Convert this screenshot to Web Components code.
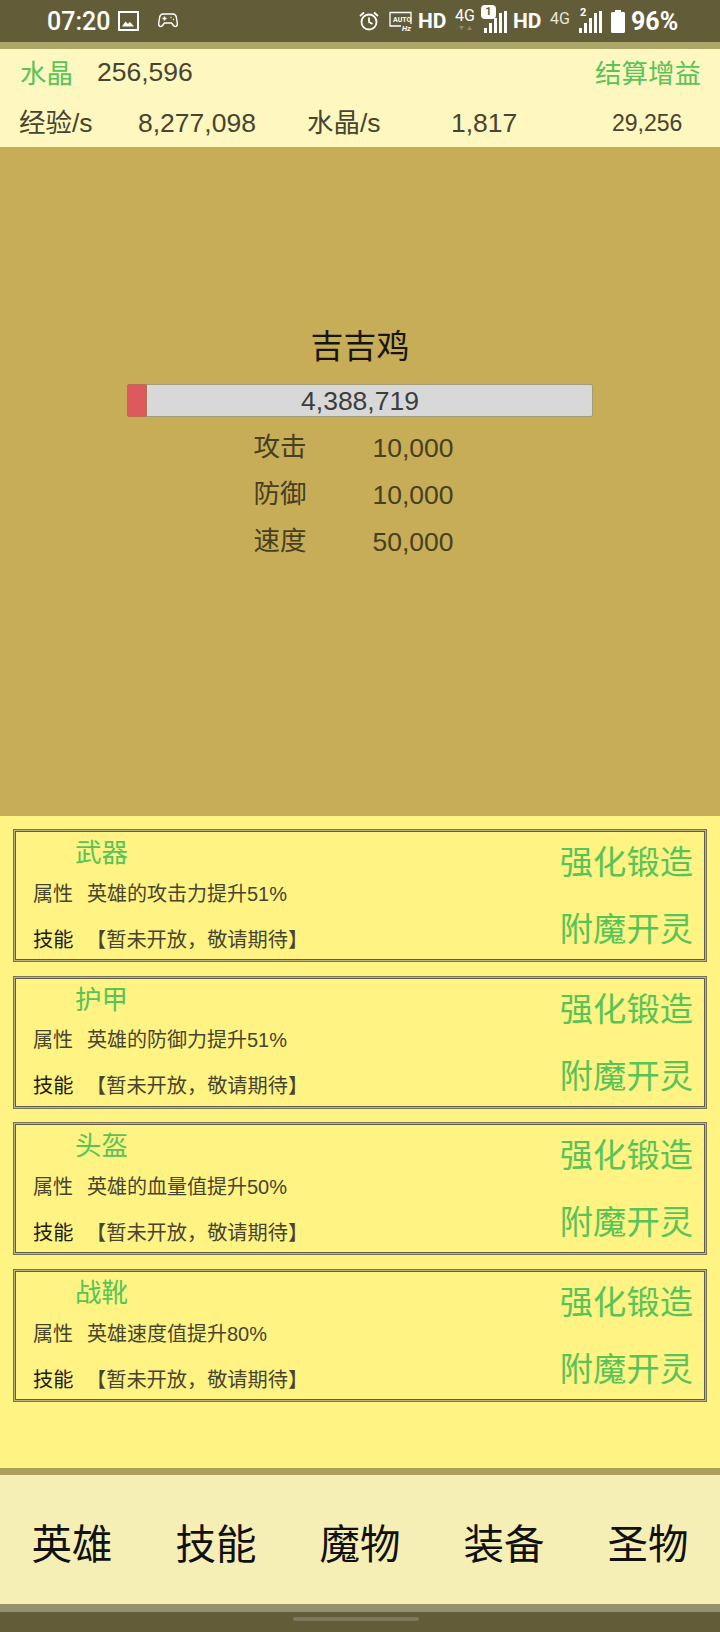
<!DOCTYPE html>
<html lang="zh">
<head>
<meta charset="utf-8">
<title>Game</title>
<style>
  html, body { margin: 0; padding: 0; }
  body {
    width: 720px;
    height: 1632px;
    overflow: hidden;
    display: flex;
    flex-direction: column;
    font-family: "Liberation Sans", "Noto Sans CJK SC", sans-serif;
    background: #625c38;
  }
</style>
</head>
<body>
<status-bar></status-bar>
<res-panel></res-panel>
<boss-panel name="吉吉鸡" hp="4,388,719"></boss-panel>
<gear-list>
  <gear-card name="武器" desc="英雄的攻击力提升51%"></gear-card>
  <gear-card name="护甲" desc="英雄的防御力提升51%"></gear-card>
  <gear-card name="头盔" desc="英雄的血量值提升50%"></gear-card>
  <gear-card name="战靴" desc="英雄速度值提升80%"></gear-card>
</gear-list>
<tab-bar></tab-bar>
<home-bar></home-bar>

<script>
class StatusBar extends HTMLElement {
  constructor() {
    super();
    this.attachShadow({ mode: 'open' });
    const bars = `<path d="M1 18h3v5H1zM6 13h3v10H6zM11 8h3v15h-3zM16 3h3v20h-3zM21 1h3v22h-3z"/>`;
    this.shadowRoot.innerHTML = `
      <style>
        :host {
          display: flex;
          align-items: center;
          flex: none;
          height: 42px;
          background: #625c38;
          color: #fff;
          padding-left: 47px;
          box-sizing: border-box;
          font-family: Roboto, sans-serif;
          white-space: nowrap;
        }
        svg { display: block; flex: none; }
        .time { font-size: 25px; font-weight: 500; width: 71px; }
        .hd { font-size: 21px; font-weight: 700; width: 28px; }
        .g { font-size: 16px; font-weight: 400; line-height: 15px; width: 19px; }
        .dim { color: #e8e6d8; }
        .pct { font-size: 25px; font-weight: 700; width: 45px; }
        .right { display: flex; align-items: center; margin-left: auto; padding-right: 44px; }
        .sim { position: relative; display: block; }
        .badge {
          position: absolute; left: -2px; top: -5px; width: 15px; height: 14px;
          border-radius: 4px; background: #fff; color: #625c38;
          font-size: 11px; font-weight: 700; line-height: 14px; text-align: center;
        }
        .two { position: absolute; left: 2px; top: -4px; font-size: 11px; font-weight: 700; }
        .fourg { display: flex; flex-direction: column; align-items: center; margin-bottom: 4px; }
        .arrows { width: 16px; height: 5px; margin-top: 3px; }
      </style>
      <span class="time">07:20</span>
      <svg width="21" height="20" viewBox="0 0 21 20" fill="none" stroke="#fff" stroke-width="2"><rect x="1" y="1" width="19" height="18"/><path d="M4 15.500l3.500-5 2.500 2.500 1.500-2 1.500 1 3 3.500z" fill="#fff" stroke="none"/></svg>
      <svg style="margin-left:19px;margin-top:-1px" width="20" height="15" viewBox="0 0 20 15" fill="none" stroke="#fff" stroke-width="1.400"><path d="M5 1h10c2 0 2.800 1 3.300 3l1 6.500c.3 3-2.300 4-3.800 2l-2-2.500h-7l-2 2.500c-1.500 2-4.100 1-3.800-2l1-6.500C2.200 2 3 1 5 1z"/><path d="M4.500 5.500h4M6.500 3.500v4M12.500 4.500h1M15 6.500h1" /></svg>
      <div class="right">
        <svg width="20" height="20" viewBox="0 0 20 20" fill="none" stroke="#fff" stroke-width="1.800"><circle cx="10" cy="11" r="7.500"/><path d="M10 6.500V11l3.500 2M1 5l4-3.500M19 5l-4-3.500"/></svg>
        <svg style="margin-left:10px;margin-top:1px" width="23" height="21" viewBox="0 0 23 21" fill="none" stroke="#fff" stroke-width="1.300"><path d="M12 15H1V1.500h21V13"/><text x="4" y="10.500" font-family="Roboto" font-size="7" font-weight="700" fill="#fff" stroke="none">AUTO</text><text x="13" y="20" font-family="Roboto" font-size="7.500" font-style="italic" font-weight="700" fill="#fff" stroke="none">Hz</text></svg>
        <span class="hd" style="margin-left:6px">HD</span>
        <span class="fourg" style="margin-left:9px"><span class="g">4G</span><svg class="arrows" viewBox="0 0 16 5" fill="#8f8a6a"><path d="M2 0h5L4.500 4zM10 4h5l-2.500-4z"/></svg></span>
        <span class="sim" style="margin-left:9px"><svg width="25" height="23" viewBox="0 0 25 23" fill="#fff">${bars}</svg><span class="badge">1</span></span>
        <span class="hd" style="margin-left:5px">HD</span>
        <span class="g dim" style="margin-left:9px;margin-bottom:6px">4G</span>
        <span class="sim" style="margin-left:9px"><svg width="25" height="23" viewBox="0 0 25 23" fill="#fff">${bars}</svg><span class="two">2</span></span>
        <svg style="margin-left:8px" width="14" height="23" viewBox="0 0 14 23" fill="#fff"><path d="M4 0h6v2h2.500c.8 0 1.500.7 1.500 1.500V21.500c0 .8-.7 1.500-1.500 1.500h-11C.7 23 0 22.300 0 21.500V3.500C0 2.700.7 2 1.500 2H4z"/></svg>
        <span class="pct" style="margin-left:6px">96%</span>
      </div>
    `;
  }
}

class ResPanel extends HTMLElement {
  constructor() {
    super();
    this.attachShadow({ mode: 'open' });
    this.shadowRoot.innerHTML = `
      <style>
        :host {
          display: block;
          flex: none;
          height: 105px;
          box-sizing: border-box;
          border-top: 7px solid #aca768;
          background: #fef7c0;
          color: #47442f;
          font-size: 26.500px;
        }
        .row { display: flex; align-items: center; white-space: nowrap; }
        .one { height: 46px; }
        .two { height: 52px; }
        .green { color: #58c356; font-size: 26.500px; margin-bottom: 2px; }
        .a { margin-left: 20px; width: 77px; }
        .claim { margin-left: auto; margin-right: 19px; }
        .b { margin-left: 19px; width: 119px; margin-bottom: 2px; }
        .c { width: 169px; margin-top: 4px; }
        .d { width: 144px; margin-bottom: 2px; }
        .e { width: 161px; margin-top: 4px; }
        .f { font-size: 23px; margin-top: 4px; }
      </style>
      <div class="row one"><span class="green a">水晶</span><span>256,596</span><span class="green claim">结算增益</span></div>
      <div class="row two"><span class="b">经验/s</span><span class="c">8,277,098</span><span class="d">水晶/s</span><span class="e">1,817</span><span class="f">29,256</span></div>
    `;
  }
}

class BossPanel extends HTMLElement {
  constructor() {
    super();
    this.attachShadow({ mode: 'open' });
    const stats = [['攻击', '10,000'], ['防御', '10,000'], ['速度', '50,000']];
    this.shadowRoot.innerHTML = `
      <style>
        :host {
          display: flex;
          flex-direction: column;
          align-items: center;
          flex: none;
          height: 669px;
          box-sizing: border-box;
          padding-top: 175px;
          background: #c7ad57;
          color: #47401f;
        }
        .name { font-size: 33px; line-height: 50px; color: #17150a; }
        .bar {
          position: relative;
          box-sizing: border-box;
          width: 466px;
          height: 33px;
          margin-top: 12px;
          border: 1px solid #a39c78;
          border-radius: 2px;
          background: #d8d8d8;
          color: #3d3d3d;
          font-size: 26.500px;
          line-height: 33px;
          text-align: center;
        }
        .fill {
          position: absolute; left: -1px; top: -1px; bottom: -1px; width: 20px;
          border: 1px solid #bb6b4e; box-sizing: border-box; border-radius: 2px;
          background: #dc5a5e;
        }
        .num { position: relative; }
        .stats { display: grid; grid-template-columns: 119px 80px; grid-auto-rows: 46.700px; margin-top: 6px; font-size: 26.500px; align-items: center; width: 199px; margin-left: -14px; }
        .stats .k { margin-bottom: 3px; }
        .stats .v { margin-top: 5px; }
      </style>
      <div class="name">${this.getAttribute('name')}</div>
      <div class="bar"><div class="fill"></div><span class="num">${this.getAttribute('hp')}</span></div>
      <div class="stats">${stats.map(s => `<span class="k">${s[0]}</span><span class="v">${s[1]}</span>`).join('')}</div>
    `;
  }
}

class GearList extends HTMLElement {
  constructor() {
    super();
    this.attachShadow({ mode: 'open' });
    this.shadowRoot.innerHTML = `
      <style>
        :host {
          display: flex;
          flex-direction: column;
          gap: 13.700px;
          flex: none;
          height: 652px;
          box-sizing: border-box;
          padding: 13px 13px 0;
          background: #fff383;
        }
      </style>
      <slot></slot>
    `;
  }
}

class GearCard extends HTMLElement {
  constructor() {
    super();
    this.attachShadow({ mode: 'open' });
    this.shadowRoot.innerHTML = `
      <style>
        :host {
          display: flex;
          justify-content: space-between;
          height: 133px;
          box-sizing: border-box;
          border: 1px solid #76735a;
          padding: 2px;
          box-shadow: inset 0 0 0 1px #bdb785, inset 0 0 0 2px #5f5c48;
          color: #47442f;
          white-space: nowrap;
        }
        .info { display: flex; flex-direction: column; padding-left: 17px; }
        .name { font-size: 26.500px; line-height: 40px; margin: 1px 0 0 42px; color: #58c356; flex: none; }
        .line { display: flex; align-items: center; font-size: 20px; height: 40px; flex: none; margin-top: -1px; }
        .line span:first-child { width: 54px; }
        .skill { color: #1e1c10; margin-top: 6px; font-size: 20.200px; }
        .skill span:last-child { margin-left: -1px; color: #47442f; }
        .acts { display: flex; flex-direction: column; margin: 7px 11px 0 0; color: #58c356; font-size: 33.300px; line-height: 48px; gap: 19px; }
      </style>
      <div class="info">
        <div class="name">${this.getAttribute('name')}</div>
        <div class="line"><span>属性</span><span>${this.getAttribute('desc')}</span></div>
        <div class="line skill"><span>技能</span><span>【暂未开放，敬请期待】</span></div>
      </div>
      <div class="acts"><span>强化锻造</span><span>附魔开灵</span></div>
    `;
  }
}

class TabBar extends HTMLElement {
  constructor() {
    super();
    this.attachShadow({ mode: 'open' });
    const tabs = ['英雄', '技能', '魔物', '装备', '圣物'];
    this.shadowRoot.innerHTML = `
      <style>
        :host {
          display: flex;
          flex: none;
          height: 144px;
          box-sizing: border-box;
          border-top: 7px solid #aca05c;
          border-bottom: 8px solid #95916a;
          padding-top: 3px;
          background: #f5efb5;
          color: #111;
          font-size: 40.500px;
        }
        span { flex: 1; display: flex; align-items: center; justify-content: center; }
      </style>
      ${tabs.map(t => `<span>${t}</span>`).join('')}
    `;
  }
}

class HomeBar extends HTMLElement {
  constructor() {
    super();
    this.attachShadow({ mode: 'open' });
    this.shadowRoot.innerHTML = `
      <style>
        :host { display: flex; justify-content: center; flex: 1; padding-top: 5px; padding-right: 9px; box-sizing: border-box; background: #625c38; }
        div { width: 126px; height: 4px; border-radius: 2px; background: #7d7860; }
      </style>
      <div></div>
    `;
  }
}

customElements.define('status-bar', StatusBar);
customElements.define('res-panel', ResPanel);
customElements.define('boss-panel', BossPanel);
customElements.define('gear-list', GearList);
customElements.define('gear-card', GearCard);
customElements.define('tab-bar', TabBar);
customElements.define('home-bar', HomeBar);
</script>
</body>
</html>
